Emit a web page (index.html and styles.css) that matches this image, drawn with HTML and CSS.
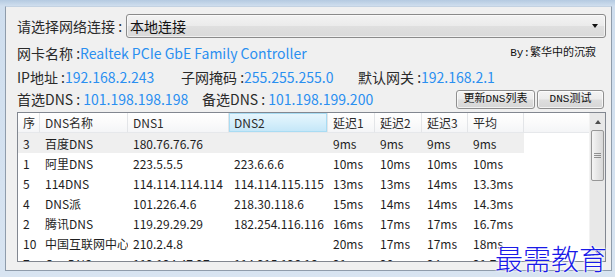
FILE: index.html
```html
<!DOCTYPE html>
<html lang="zh-CN">
<head>
    <meta charset="UTF-8">
    <title>DNS测试</title>
    <link rel="stylesheet" href="styles.css">
</head>
<body>
    <div class="window">
        <div class="row row-conn">
            <span class="label">请选择网络连接 :</span>
            <div class="combo">
                <span>本地连接</span>
                <span class="combo-arrow"></span>
            </div>
        </div>

        <div class="row row-nic">
            <span class="label">网卡名称 :</span><span class="value">Realtek PCIe GbE Family Controller</span>
            <span class="author">By:繁华中的沉寂</span>
        </div>

        <div class="row row-ip">
            <div class="field f-ip"><span class="label">IP地址 :</span><span class="value">192.168.2.243</span></div>
            <div class="field f-mask"><span class="label">子网掩码 :</span><span class="value">255.255.255.0</span></div>
            <div class="field"><span class="label">默认网关 :</span><span class="value">192.168.2.1</span></div>
        </div>

        <div class="row row-dns">
            <div class="field f-dns1"><span class="label">首选DNS : </span><span class="value">101.198.198.198</span></div>
            <div class="field"><span class="label">备选DNS : </span><span class="value">101.198.199.200</span></div>
            <div class="buttons">
                <button class="btn btn-update">更新DNS列表</button>
                <button class="btn btn-test">DNS测试</button>
            </div>
        </div>

        <div class="list">
            <div class="list-body">
                <table class="grid">
                    <colgroup>
                        <col style="width:22px">
                        <col style="width:88px">
                        <col style="width:101px">
                        <col style="width:99px">
                        <col style="width:47px">
                        <col style="width:47px">
                        <col style="width:46px">
                        <col style="width:56px">
                        <col>
                    </colgroup>
                    <thead>
                        <tr>
                            <th>序</th>
                            <th>DNS名称</th>
                            <th>DNS1</th>
                            <th class="hot">DNS2</th>
                            <th>延迟1</th>
                            <th>延迟2</th>
                            <th>延迟3</th>
                            <th>平均</th>
                            <th class="filler"></th>
                        </tr>
                    </thead>
                    <tbody>
                        <tr class="selected">
                            <td>3</td><td>百度DNS</td><td>180.76.76.76</td><td></td>
                            <td>9ms</td><td>9ms</td><td>9ms</td><td>9ms</td>
                        </tr>
                        <tr>
                            <td>1</td><td>阿里DNS</td><td>223.5.5.5</td><td>223.6.6.6</td>
                            <td>10ms</td><td>10ms</td><td>10ms</td><td>10ms</td>
                        </tr>
                        <tr>
                            <td>5</td><td>114DNS</td><td>114.114.114.114</td><td>114.114.115.115</td>
                            <td>13ms</td><td>13ms</td><td>14ms</td><td>13.3ms</td>
                        </tr>
                        <tr>
                            <td>4</td><td>DNS派</td><td>101.226.4.6</td><td>218.30.118.6</td>
                            <td>15ms</td><td>14ms</td><td>14ms</td><td>14.3ms</td>
                        </tr>
                        <tr>
                            <td>2</td><td>腾讯DNS</td><td>119.29.29.29</td><td>182.254.116.116</td>
                            <td>16ms</td><td>17ms</td><td>17ms</td><td>16.7ms</td>
                        </tr>
                        <tr>
                            <td>10</td><td>中国互联网中心</td><td>210.2.4.8</td><td></td>
                            <td>20ms</td><td>17ms</td><td>17ms</td><td>18ms</td>
                        </tr>
                        <tr>
                            <td>7</td><td>OneDNS</td><td>112.124.47.27</td><td>114.215.126.16</td>
                            <td>21ms</td><td>20ms</td><td>24ms</td><td>21.7ms</td>
                        </tr>
                    </tbody>
                </table>
            </div>
            <div class="scrollbar">
                <div class="sb-btn sb-up"><span class="sb-arrow-up"></span></div>
                <div class="sb-thumb"><span class="grip"></span></div>
                <div class="sb-track"></div>
                <div class="sb-btn sb-down"><span class="sb-arrow-down"></span></div>
            </div>
        </div>

        <div class="watermark">最需教育</div>
    </div>
</body>
</html>
```

FILE: styles.css
```css
* {
    margin: 0;
    padding: 0;
    box-sizing: border-box;
}

body {
    height: 277px;
    overflow: hidden;
    padding: 6px 3px 6px 5px;
    background: linear-gradient(#b4cae1 0, #cfdeee 6px, #d8e4f1 100%);
    font-family: "Noto Sans CJK SC", sans-serif;
    color: #222;
}

.window {
    position: relative;
    height: 100%;
    border: 1px solid #8f9cab;
    border-top-color: #c3d2e2;
    background: #f0f0f0;
    padding: 7px 5px 0 11px;
}

.row {
    display: flex;
    align-items: center;
    font-size: 14px;
    line-height: 22px;
    height: 22px;
    white-space: nowrap;
}

.label {
    color: #2a2a2a;
}

.value {
    color: #2a8ff0;
}

/* 网络连接下拉框 */
.row-conn {
    height: 24px;
}

.combo {
    flex: 1;
    margin-left: 4px;
    height: 24px;
    display: flex;
    align-items: center;
    padding: 0 3px;
    border: 1px solid #8a8a8a;
    border-radius: 3px;
    background: linear-gradient(#f3f3f3, #ebebeb 48%, #dfdfdf 52%, #d9d9d9);
    box-shadow: inset 0 0 0 1px rgba(255, 255, 255, 0.6);
    color: #111;
}

.combo-arrow {
    margin-left: auto;
    margin-right: 4px;
    border-left: 3px solid transparent;
    border-right: 3px solid transparent;
    border-top: 4px solid #111;
}

.row-nic {
    margin-top: 4px;
}

.author {
    margin-left: auto;
    margin-right: 10px;
    font-family: "Liberation Mono", "Noto Sans CJK SC", monospace;
    font-size: 11px;
    color: #111;
}

.row-ip {
    margin-top: 2px;
}

.f-ip {
    width: 164px;
}

.f-mask {
    width: 177px;
}

.f-dns1 {
    width: 185px;
}

.buttons {
    margin-left: auto;
    margin-right: 2px;
    display: flex;
    gap: 2px;
}

.btn {
    height: 19px;
    border: 1px solid #8f8f8f;
    border-radius: 3px;
    background: linear-gradient(#f4f4f4, #ececec 48%, #dedede 52%, #d6d6d6);
    box-shadow: inset 0 0 0 1px rgba(255, 255, 255, 0.7);
    font-family: "Liberation Mono", "Noto Sans CJK SC", monospace;
    font-size: 11px;
    line-height: 17px;
    color: #111;
}

.btn-update {
    width: 79px;
}

.btn-test {
    width: 67px;
}

/* DNS 列表 */
.list {
    margin-top: 2px;
    height: 150px;
    border: 1px solid #828790;
    background: #fff;
    display: flex;
}

.list-body {
    flex: 1;
    overflow: hidden;
}

.grid {
    width: 100%;
    table-layout: fixed;
    border-collapse: separate;
    border-spacing: 0;
    font-size: 12px;
    color: #1e1e1e;
}

.grid tr {
    height: 20px;
}

.grid th,
.grid td {
    padding: 0 0 0 5px;
    text-align: left;
    font-weight: normal;
    white-space: nowrap;
    overflow: hidden;
    line-height: 19px;
}

.grid th {
    background: linear-gradient(#ffffff, #fbfbfb 50%, #f4f5f7);
    border-right: 1px solid #e3e5e8;
    border-bottom: 1px solid #e6e8eb;
    color: #2b2b2b;
}

.grid th.hot {
    background: linear-gradient(#e8f6fd, #d6effb 50%, #c3e6f8);
    box-shadow: inset 0 0 0 1px #a9dcf3;
}

.grid th.filler {
    border-right: none;
}

.grid .selected td {
    background: #efefef;
}

/* 滚动条 */
.scrollbar {
    width: 16px;
    display: flex;
    flex-direction: column;
    background: #e8e8e8;
    border-left: 1px solid #f2f2f2;
}

.sb-btn {
    height: 17px;
    display: flex;
    align-items: center;
    justify-content: center;
}

.sb-arrow-up {
    border-left: 3px solid transparent;
    border-right: 3px solid transparent;
    border-bottom: 4px solid #4d4d4d;
}

.sb-arrow-down {
    border-left: 3px solid transparent;
    border-right: 3px solid transparent;
    border-top: 4px solid #4d4d4d;
}

.sb-thumb {
    height: 51px;
    margin: 0 1px;
    border: 1px solid #979797;
    border-radius: 2px;
    background: linear-gradient(90deg, #f5f5f5, #e6e6e6 50%, #d8d8d8);
    display: flex;
    align-items: center;
    justify-content: center;
}

.grip {
    width: 7px;
    height: 5px;
    background: repeating-linear-gradient(#555 0, #555 1px, transparent 1px, transparent 2px);
    opacity: 0.6;
}

.sb-track {
    flex: 1;
}

.watermark {
    position: absolute;
    right: 4px;
    bottom: -3px;
    font-size: 28px;
    line-height: 30px;
    font-weight: 300;
    color: #1a1ae8;
    text-shadow: 0 0 2px #fff, 0 0 2px #fff, 0 0 3px #fff;
}
```
